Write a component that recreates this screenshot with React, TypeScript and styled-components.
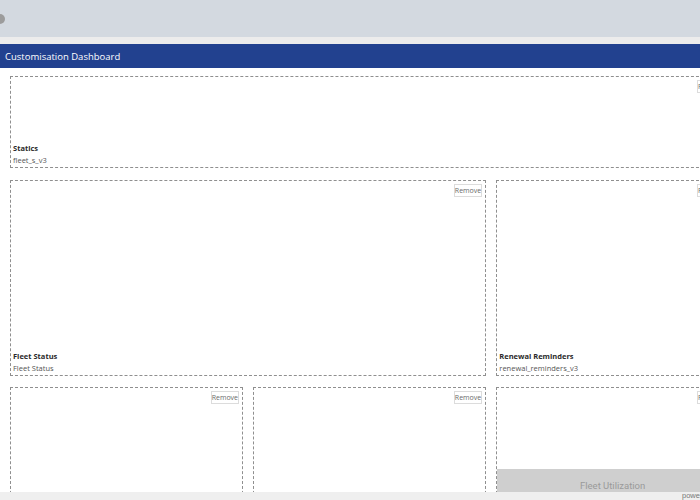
import React from 'react';
import styled, { createGlobalStyle } from 'styled-components';

const GlobalStyle = createGlobalStyle`
    html, body {
        margin: 0;
        padding: 0;
        background: #ffffff;
        overflow: hidden;
        font-family: "Open Sans", "Noto Sans", sans-serif;
    }
`

const Page = styled.div`
    width: 740px;
    min-height: 700px;
    display: flex;
    flex-direction: column;
`

const TopBar = styled.header`
    height: 37px;
    background: #d3d9e0;
    display: flex;
    align-items: center;
`

const Avatar = styled.span`
    width: 10px;
    height: 10px;
    border-radius: 50%;
    background: #9c9c9c;
    margin-left: -5px;
`

const Strip = styled.div`
    height: 7px;
    background: #ececec;
`

const TitleBar = styled.div`
    height: 24px;
    background: #22418f;
    color: #ffffff;
    font-size: 9.5px;
    display: flex;
    align-items: center;
    padding-left: 5px;
`

const Grid = styled.main`
    display: grid;
    grid-template-columns: repeat(3, 232.67px);
    column-gap: 10.5px;
    row-gap: 11.5px;
    padding: 8px 0 0 10px;
`

const Card = styled.section<{ span?: number; height: number; top?: boolean }>`
    position: relative;
    grid-column: span ${props => props.span || 1};
    height: ${props => props.height}px;
    border: 1px dashed #8f8f8f;
    box-sizing: border-box;
    display: flex;
    flex-direction: column;
    justify-content: ${props => props.top ? 'flex-start' : 'flex-end'};
    padding: 0 2px 1px;
`

const RemoveButton = styled.button`
    position: absolute;
    top: 3px;
    right: 3px;
    height: 13px;
    width: 28px;
    padding: 0;
    background: #ffffff;
    border: 1px solid #dcdcdc;
    color: #6a6a6a;
    font-family: "Open Sans", sans-serif;
    font-size: 7px;
`

const CardTitle = styled.div`
    font-size: 7.5px;
    font-weight: 700;
    color: #2a2a2a;
    line-height: 12px;
`

const CardSub = styled.div`
    font-size: 7.5px;
    color: #555;
    line-height: 12px;
`

const Placeholder = styled.div`
    margin: 81px -2px -2px;
    height: 110px;
    background: #cfcfcf;
    color: #9a9a9a;
    font-family: Roboto, "Liberation Sans", sans-serif;
    font-size: 9.5px;
    text-align: center;
    padding-top: 11px;
    box-sizing: border-box;
    align-self: stretch;
`

const Footer = styled.footer`
    position: fixed;
    left: 0;
    right: 0;
    bottom: 0;
    height: 8px;
    background: #efefef;
    color: #777;
    font-family: "Liberation Sans", sans-serif;
    font-size: 7.5px;
    line-height: 8px;
    padding-left: 682px;
    white-space: nowrap;
    overflow: hidden;
`

const App: React.FC = () => {
    return (
        <>
        <GlobalStyle />
        <Page>
            <TopBar><Avatar /></TopBar>
            <Strip />
            <TitleBar>Customisation Dashboard</TitleBar>
            <Grid>
                <Card span={3} height={92}>
                    <RemoveButton>Remove</RemoveButton>
                    <CardTitle>Statics</CardTitle>
                    <CardSub>fleet_s_v3</CardSub>
                </Card>
                <Card span={2} height={196}>
                    <RemoveButton>Remove</RemoveButton>
                    <CardTitle>Fleet Status</CardTitle>
                    <CardSub>Fleet Status</CardSub>
                </Card>
                <Card height={196}>
                    <RemoveButton>Remove</RemoveButton>
                    <CardTitle>Renewal Reminders</CardTitle>
                    <CardSub>renewal_reminders_v3</CardSub>
                </Card>
                <Card height={196}>
                    <RemoveButton>Remove</RemoveButton>
                </Card>
                <Card height={196}>
                    <RemoveButton>Remove</RemoveButton>
                </Card>
                <Card height={196} top>
                    <RemoveButton>Remove</RemoveButton>
                    <Placeholder>Fleet Utilization</Placeholder>
                </Card>
            </Grid>
        </Page>
        <Footer>powered by</Footer>
        </>
    )
}

export default App
